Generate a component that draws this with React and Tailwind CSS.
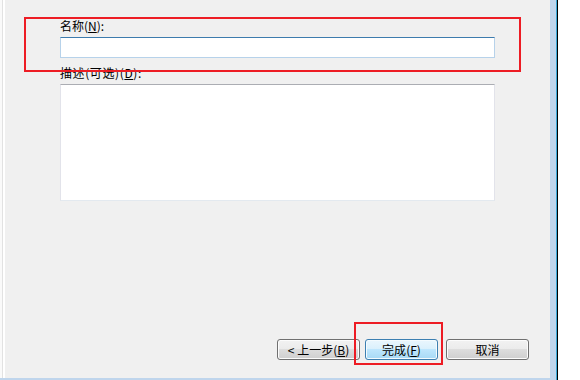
import React from "react";

const font = { fontFamily: '"Noto Sans CJK SC", "Liberation Sans", sans-serif' };

const Key = ({ k }) => (
  <>
    (<span className="underline underline-offset-1">{k}</span>)
  </>
);

const WinButton = ({ children, primary, className = "" }) => (
  <button
    className={
      "h-[21px] rounded-[3px] border text-[12px] leading-[16px] text-black flex items-center justify-center " +
      (primary
        ? "border-[#3c7fb1] bg-[linear-gradient(to_bottom,#eaf6fd_0%,#d9f0fc_50%,#bee6fd_50%,#a7d9f5_100%)] shadow-[inset_0_0_0_1px_#f4fbfe] "
        : "border-[#707070] bg-[linear-gradient(to_bottom,#f2f2f2_0%,#ebebeb_50%,#dddddd_50%,#cfcfcf_100%)] shadow-[inset_0_0_0_1px_#fcfcfc] ") +
      className
    }
  >
    {children}
  </button>
);

export default function App() {
  return (
    <div className="relative w-[580px] h-[380px] flex bg-white overflow-hidden" style={font}>
      <div className="w-[556px] flex flex-col">
        <div className="flex flex-1">
          {/* left edge */}
          <div className="w-[5px] flex">
            <div className="w-[2px] bg-[#fafafa]" />
            <div className="w-px bg-[#e2e2e2]" />
            <div className="w-[2px] bg-white" />
          </div>

          {/* dialog page */}
          <div className="w-[545px] bg-[#f0f0f0] flex flex-col pl-[55px] pr-[21px]">
            <div className="mt-[18px] h-[16px] text-[12px] leading-[16px] text-black">
              名称<Key k="N" />:
            </div>
            <div className="mt-[3px] w-[435px] h-[21px] bg-white border border-[#b7d2ea] border-t-[#3d7bad]" />

            <div className="mt-[7px] h-[16px] text-[12px] leading-[16px] tracking-[0.6px] text-black">
              描述(可选)<Key k="D" />:
            </div>
            <div className="mt-[3px] w-[435px] h-[117px] bg-white border border-[#e2e3ea] border-t-[#abadb3] border-b-[#e3e9ef]" />

            <div className="mt-auto mb-[18px] flex justify-end">
              <WinButton className="w-[83px]">
                &lt; 上一步<Key k="B" />
              </WinButton>
              <WinButton primary className="w-[73px] ml-[5px]">
                完成<Key k="F" />
              </WinButton>
              <WinButton className="w-[83px] ml-[8px]">取消</WinButton>
            </div>
          </div>

          {/* right frame */}
          <div className="w-[6px] bg-[#bfd5ec]" />
        </div>
        <div className="h-[2px] bg-[#bfd5ec]" />
      </div>
      <div className="w-px bg-[#3aa8d8]" />
      <div className="w-px bg-black" />
      <div className="flex-1 bg-white" />

      {/* annotation boxes */}
      <div className="absolute left-[24px] top-[17px] w-[497px] h-[55px] border-2 border-[#ed1c24]" />
      <div className="absolute left-[354px] top-[322px] w-[89px] h-[43px] border-2 border-[#ed1c24]" />
    </div>
  );
}
